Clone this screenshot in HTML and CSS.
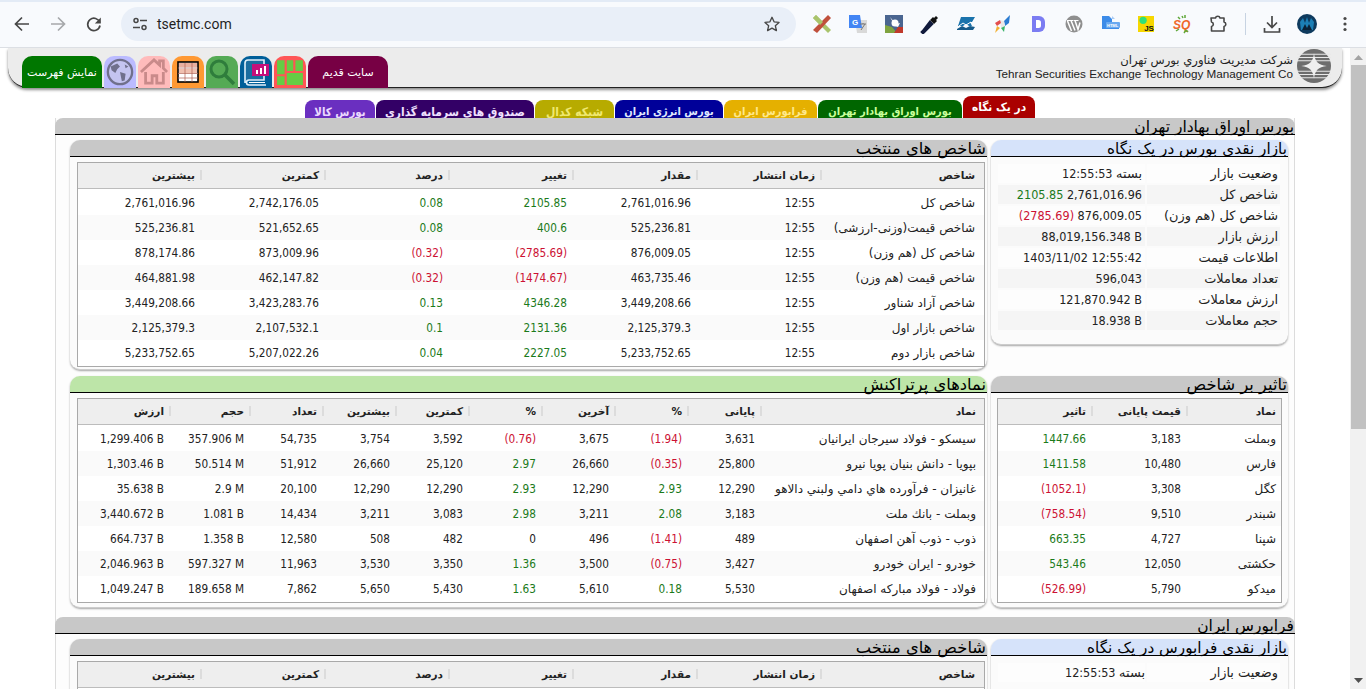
FILE: index.html
```html
<!DOCTYPE html>
<html lang="fa">
<head>
<meta charset="utf-8">
<title>tsetmc.com</title>
<link rel="stylesheet" href="styles.css">
</head>
<body>
<div class="chrome">
  <div class="nav">
    <svg class="ic" viewBox="0 0 20 20"><path d="M17 10H4M10 3.500 3.500 10l6.500 6.500" fill="none" stroke="#474747" stroke-width="1.700"/></svg>
    <svg class="ic" viewBox="0 0 20 20"><path d="M3 10h13M10 3.500l6.500 6.500-6.500 6.500" fill="none" stroke="#a6a8ab" stroke-width="1.700"/></svg>
    <svg class="ic" viewBox="0 0 20 20"><path d="M15.800 8.500A6.200 6.200 0 1 0 16 11.500" fill="none" stroke="#474747" stroke-width="1.700"/><path d="M16.800 3.500v6h-6z" fill="#474747"/></svg>
  </div>
  <div class="omnibox">
    <span class="tune"><svg width="16" height="16" viewBox="0 0 16 16"><circle cx="4" cy="4.500" r="2" fill="none" stroke="#474747" stroke-width="1.500"/><path d="M8 4.500h7M1 11.500h7" stroke="#474747" stroke-width="1.500"/><circle cx="12" cy="11.500" r="2" fill="none" stroke="#474747" stroke-width="1.500"/></svg></span>
    <span class="url">tsetmc.com</span>
    <svg class="star" viewBox="0 0 20 20"><path d="M10 2.500l2.300 5.100 5.500.6-4.100 3.700 1.200 5.500L10 14.600l-4.900 2.800 1.200-5.500L2.200 8.200l5.500-.6z" fill="none" stroke="#474747" stroke-width="1.500" stroke-linejoin="round"/></svg>
  </div>
  <div class="exts">
    <svg class="ext" viewBox="0 0 20 20"><path d="M1 4l3-3 15 15-3 3z" fill="#a9c46c"/><path d="M16 1l3 3L5 19l-4-3z" fill="#c0503c"/><path d="M1 4l3-3 7 7-3 3z" fill="#a9c46c"/></svg>
    <svg class="ext" viewBox="0 0 20 20"><path d="M7 6h12v13H9z" fill="#d9d9d9"/><path d="M1 1h11l2 13H1z" fill="#4285f4"/><text x="4" y="11" class="ext-g">G</text><path d="M12 10h6M15 9v1M13 16l4-6" stroke="#777" stroke-width="1"/></svg>
    <svg class="ext" viewBox="0 0 20 20"><rect x="1" y="1" width="18" height="18" fill="#4a6590"/><path d="M1 19V11l7 2 5 6z" fill="#7fa33f"/><path d="M10 19l4-6 5 0v6z" fill="#c0392b"/><path d="M6 3l6 7 4-1-2 4-3-1" fill="#fff"/><circle cx="11" cy="9" r="3.500" fill="#fff"/></svg>
    <svg class="ext" viewBox="0 0 20 20"><path d="M3 17l-1 1 1 1 1-1 8-8-2-2z" fill="#1c2b55" stroke="#111a3c" stroke-width="2.500"/><path d="M10 6l4 4 3-3-1-1 2-2-2-2-2 2-1-1z" fill="#111"/></svg>
    <svg class="ext" viewBox="0 0 20 20"><path d="M5 3h14l-3 5h-2l2 4h-3l-3-2-3 2H2z" fill="#1a73ac"/><path d="M1 15l5-3 4 2 4-2 5 1-2 3H1z" fill="#155a8a"/><path d="M3 12l4-3 3 2 5-3" stroke="#fff" fill="none"/></svg>
    <svg class="ext" viewBox="0 0 20 20"><path d="M12 7l6-6-1 8-4 3z" fill="#2a7bd1"/><path d="M8 6l4 1 1 5-4 2z" fill="#e8e8e8"/><path d="M3 9l5-3 1 3-4 3z" fill="#e34d4d"/><path d="M9 14l4-2-1 6z" fill="#3ab56a"/><path d="M5 12l3 2-5 5z" fill="#f2b134"/></svg>
    <svg class="ext" viewBox="0 0 20 20"><path d="M4 2h7a6 6 0 0 1 6 6v4a6 6 0 0 1-6 6H4z" fill="#7b7cf2"/><path d="M8 6h2.500a2.500 2.500 0 0 1 2.500 2.500v3a2.500 2.500 0 0 1-2.500 2.500H8z" fill="#fff"/></svg>
    <svg class="ext" viewBox="0 0 20 20"><circle cx="10" cy="10" r="8.500" fill="#8f8f8f"/><path d="M3.500 7l4 10M7 6.500l4 10M11 6.500l3 9 2-7" fill="none" stroke="#fff" stroke-width="1.500"/><path d="M3 6.500h6M9.500 6.500h5" stroke="#fff" stroke-width="1"/></svg>
    <svg class="ext" viewBox="0 0 20 20"><path d="M2 2h7l3 3v3h7v7H2z" fill="#3c8be8"/><path d="M12 2v3h3" fill="#a8cbf5"/><rect x="6" y="8" width="14" height="6" rx="1" fill="#6aa9f0"/><text x="7" y="13" class="ext-html">HTML</text></svg>
    <svg class="ext js" viewBox="0 0 22 22"><rect width="22" height="22" fill="#f7d700"/><circle cx="7" cy="6" r="5" fill="#2fe07a"/><text x="8.500" y="20" class="ext-js">JS</text></svg>
    <svg class="ext" viewBox="0 0 20 20"><text x="1" y="15" class="ext-sq">SQ</text><path d="M6 3l2 2M13 1v3M10 2l1 2M4 17l3-2M12 19l2-3M16 18l-2-2" stroke="#5fa83a" stroke-width="1.500"/></svg>
    <svg class="ic puzzle" viewBox="0 0 20 20"><path d="M3 4h4.500a2.300 2.300 0 0 1 4.500 0H16v4a2.300 2.300 0 0 1 0 4.500V17H3.500v-4.500a2.300 2.300 0 0 0 0-4.500z" fill="none" stroke="#474747" stroke-width="1.600" stroke-linejoin="round"/></svg>
    <span class="sep"></span>
    <svg class="ic dl" viewBox="0 0 20 20"><path d="M10 2v11M5 8.500l5 5 5-5M2.500 14v4h15v-4" fill="none" stroke="#474747" stroke-width="1.700"/></svg>
    <svg class="avatar" viewBox="0 0 20 20"><circle cx="10" cy="10" r="10" fill="#0e3a5e"/><path d="M3 8l3-4 2 5 2-6 2 6 2-5 3 4-1 8H4z" fill="#1c7fb6"/><path d="M5 16l3-6 2 4 2-4 3 6z" fill="#0a2238"/></svg>
    <svg class="menu" viewBox="0 0 4 16"><circle cx="2" cy="2.500" r="1.600" fill="#474747"/><circle cx="2" cy="8" r="1.600" fill="#474747"/><circle cx="2" cy="13.500" r="1.600" fill="#474747"/></svg>
  </div>
</div>

<div class="viewport">
  <div class="page">
    <header class="site-head">
      <div class="brand">
        <svg class="logo" viewBox="0 0 32 32"><circle cx="16" cy="16" r="16" fill="#6d6d6d"/><path d="M0 5h32M0 8h32M0 11h32M0 21h32M0 24h32M0 27h32" stroke="#e8e8e8" stroke-width="1"/><path d="M16 4c1 8 4 11 12 12-8 1-11 4-12 12-1-8-4-11-12-12 8-1 11-4 12-12z" fill="#efefef"/></svg>
        <div class="brand-text">
          <div>شرکت مدیریت فناوري بورس تهران</div>
          <div class="en" dir="ltr">Tehran Securities Exchange Technology Management Co</div>
        </div>
      </div>
      <nav class="tools">
        <a class="tool wide maroon">سایت قدیم</a>
        <a class="tool red"><svg viewBox="0 0 26 26" class="tool-ic"><path d="M1 2h7v13H1zM10 2h6v10h-6zM18 2h7v10h-7zM1 17h7v8H1zM10 14h15v11H10z" fill="#66cc44"/></svg></a>
        <a class="tool blue"><svg viewBox="0 0 28 28" class="tool-ic"><path d="M3 25V5a3 3 0 0 1 3-3h16v20H7a2.500 2.500 0 0 0 0 5h17" fill="#1a6d9f" stroke="#dff0fa" stroke-width="1.600"/><path d="M7 24.500h16" stroke="#fff"/><rect x="10" y="6" width="17" height="12" fill="#c4107a"/><path d="M14 12h2v4h-2zM18 10h2v6h-2zM22 8h2v8h-2z" fill="#fff"/></svg></a>
        <a class="tool green"><svg viewBox="0 0 28 28" class="tool-ic"><circle cx="11" cy="11" r="8" fill="none" stroke="#2f7d3c" stroke-width="3"/><path d="M17 17l9 9" stroke="#2f7d3c" stroke-width="3.500"/></svg></a>
        <a class="tool orange"><svg viewBox="0 0 22 22" class="tool-ic tbl"><rect x="1" y="1" width="20" height="20" fill="#fff" stroke="#000" stroke-width="1.600"/><rect x="2" y="2" width="18" height="4" fill="#e8b0a0"/><rect x="2" y="8" width="18" height="4" fill="#f0c0b0"/><path d="M1 7h20M1 12.500h20M1 17h20M8 2v19M15 2v19" stroke="#b06050" stroke-width=".7"/></svg></a>
        <a class="tool pink"><svg viewBox="0 0 30 30" class="tool-ic"><path d="M1 15 15 2l6 5.500V3h4v8l4 4" fill="none" stroke="#c98a8a" stroke-width="3"/><path d="M6 15v12h7v-8h5v8h7V15" fill="none" stroke="#c98a8a" stroke-width="3"/></svg></a>
        <a class="tool lav"><svg viewBox="0 0 30 30" class="tool-ic"><circle cx="15" cy="15" r="13" fill="#c4c4f0" stroke="#70708c" stroke-width="2.500"/><path d="M5 9l7-3 3 3-3 3-2 4-4-3zM15 15l6 2-1 7-3 1-1-5z" fill="#70708c"/><path d="M20 7l4 2-3 2z" fill="#70708c"/></svg></a>
        <a class="tool wide dgreen">نمایش فهرست</a>
      </nav>
    </header>

    <div class="tabs">
      <a class="tab active t-red">در یک نگاه</a>
      <a class="tab t-green">بورس اوراق بهادار تهران</a>
      <a class="tab t-gold">فرابورس ایران</a>
      <a class="tab t-navy">بورس انرژی ایران</a>
      <a class="tab t-olive">شبکه کدال</a>
      <a class="tab t-indigo">صندوق های سرمایه گذاری</a>
      <a class="tab t-purple">بورس کالا</a>
    </div>

    <main class="sheet">
      <h2 class="sec-title">بورس اوراق بهادار تهران</h2>
      <div class="sec-grid">
        <section class="panel side tall">
          <h3 class="p-title blue-h">بازار نقدی بورس در یک نگاه</h3>
          <div class="facts">
            <div class="fact"><span class="k">وضعیت بازار</span><span class="v"><span class="ar">بسته</span> 12:55:53</span></div>
            <div class="fact"><span class="k">شاخص کل</span><span class="v" dir="ltr"><span class="up">2105.85</span> 2,761,016.96</span></div>
            <div class="fact"><span class="k">شاخص کل (هم وزن)</span><span class="v" dir="ltr"><span class="dn">(2785.69)</span> 876,009.05</span></div>
            <div class="fact"><span class="k">ارزش بازار</span><span class="v" dir="ltr">88,019,156.348 B</span></div>
            <div class="fact"><span class="k">اطلاعات قیمت</span><span class="v" dir="ltr">1403/11/02 12:55:42</span></div>
            <div class="fact"><span class="k">تعداد معاملات</span><span class="v" dir="ltr">596,043</span></div>
            <div class="fact"><span class="k">ارزش معاملات</span><span class="v" dir="ltr">121,870.942 B</span></div>
            <div class="fact"><span class="k">حجم معاملات</span><span class="v" dir="ltr">18.938 B</span></div>
          </div>
        </section>
        <section class="panel wide-p">
          <h3 class="p-title">شاخص های منتخب</h3>
          <div class="tbl-box">
            <table class="grid idx">
              <colgroup><col class="c1"><col class="c"><col class="c"><col class="c"><col class="c"><col class="c"><col class="c"></colgroup>
              <thead><tr><th>شاخص</th><th>زمان انتشار</th><th>مقدار</th><th>تغییر</th><th>درصد</th><th>کمترین</th><th>بیشترین</th></tr></thead>
              <tbody>
                <tr><td>شاخص کل</td><td>12:55</td><td>2,761,016.96</td><td class="up">2105.85</td><td class="up">0.08</td><td>2,742,176.05</td><td>2,761,016.96</td></tr>
                <tr><td>شاخص قیمت(وزنی-ارزشی)</td><td>12:55</td><td>525,236.81</td><td class="up">400.6</td><td class="up">0.08</td><td>521,652.65</td><td>525,236.81</td></tr>
                <tr><td>شاخص کل (هم وزن)</td><td>12:55</td><td>876,009.05</td><td class="dn">(2785.69)</td><td class="dn">(0.32)</td><td>873,009.96</td><td>878,174.86</td></tr>
                <tr><td>شاخص قیمت (هم وزن)</td><td>12:55</td><td>463,735.46</td><td class="dn">(1474.67)</td><td class="dn">(0.32)</td><td>462,147.82</td><td>464,881.98</td></tr>
                <tr><td>شاخص آزاد شناور</td><td>12:55</td><td>3,449,208.66</td><td class="up">4346.28</td><td class="up">0.13</td><td>3,423,283.76</td><td>3,449,208.66</td></tr>
                <tr><td>شاخص بازار اول</td><td>12:55</td><td>2,125,379.3</td><td class="up">2131.36</td><td class="up">0.1</td><td>2,107,532.1</td><td>2,125,379.3</td></tr>
                <tr><td>شاخص بازار دوم</td><td>12:55</td><td>5,233,752.65</td><td class="up">2227.05</td><td class="up">0.04</td><td>5,207,022.26</td><td>5,233,752.65</td></tr>
              </tbody>
            </table>
          </div>
        </section>
        <section class="panel side low">
          <h3 class="p-title">تاثیر بر شاخص</h3>
          <div class="tbl-box">
            <table class="grid impact">
              <colgroup><col class="i1"><col class="i2"><col class="i3"></colgroup>
              <thead><tr><th>نماد</th><th>قیمت پایانی</th><th>تاثیر</th></tr></thead>
              <tbody>
                <tr><td>وبملت</td><td>3,183</td><td class="up">1447.66</td></tr>
                <tr><td>فارس</td><td>10,480</td><td class="up">1411.58</td></tr>
                <tr><td>کگل</td><td>3,308</td><td class="dn">(1052.1)</td></tr>
                <tr><td>شبندر</td><td>9,510</td><td class="dn">(758.54)</td></tr>
                <tr><td>شپنا</td><td>4,727</td><td class="up">663.35</td></tr>
                <tr><td>حکشتی</td><td>12,050</td><td class="up">543.46</td></tr>
                <tr><td>میدکو</td><td>5,790</td><td class="dn">(526.99)</td></tr>
              </tbody>
            </table>
          </div>
        </section>
        <section class="panel wide-p low">
          <h3 class="p-title green-h">نمادهای پرتراکنش</h3>
          <div class="tbl-box">
            <table class="grid top">
              <colgroup><col class="t1"><col class="t2"><col class="t2"><col class="t2"><col class="t2"><col class="t2"><col class="t2"><col class="t2"><col class="t3"><col class="t4"></colgroup>
              <thead><tr><th>نماد</th><th>پایانی</th><th>%</th><th>آخرین</th><th>%</th><th>کمترین</th><th>بیشترین</th><th>تعداد</th><th>حجم</th><th>ارزش</th></tr></thead>
              <tbody>
                <tr><td>سیسکو - فولاد سیرجان ایرانیان</td><td>3,631</td><td class="dn">(1.94)</td><td>3,675</td><td class="dn">(0.76)</td><td>3,592</td><td>3,754</td><td>54,735</td><td>357.906 M</td><td>1,299.406 B</td></tr>
                <tr><td>بپویا - دانش بنیان پویا نیرو</td><td>25,800</td><td class="dn">(0.35)</td><td>26,660</td><td class="up">2.97</td><td>25,120</td><td>26,660</td><td>51,912</td><td>50.514 M</td><td>1,303.46 B</td></tr>
                <tr><td>غانیزان - فرآورده هاي دامي ولبني دالاهو</td><td>12,290</td><td class="up">2.93</td><td>12,290</td><td class="up">2.93</td><td>12,290</td><td>12,290</td><td>20,100</td><td>2.9 M</td><td>35.638 B</td></tr>
                <tr><td>وبملت - بانك ملت</td><td>3,183</td><td class="up">2.08</td><td>3,211</td><td class="up">2.98</td><td>3,083</td><td>3,211</td><td>14,434</td><td>1.081 B</td><td>3,440.672 B</td></tr>
                <tr><td>ذوب - ذوب آهن اصفهان</td><td>489</td><td class="dn">(1.41)</td><td>496</td><td>0</td><td>482</td><td>508</td><td>12,580</td><td>1.358 B</td><td>664.737 B</td></tr>
                <tr><td>خودرو - ایران خودرو</td><td>3,427</td><td class="dn">(0.75)</td><td>3,500</td><td class="up">1.36</td><td>3,350</td><td>3,530</td><td>11,963</td><td>597.327 M</td><td>2,046.963 B</td></tr>
                <tr><td>فولاد - فولاد مباركه اصفهان</td><td>5,530</td><td class="up">0.18</td><td>5,610</td><td class="up">1.63</td><td>5,430</td><td>5,650</td><td>7,862</td><td>189.658 M</td><td>1,049.247 B</td></tr>
              </tbody>
            </table>
          </div>
        </section>
      </div>

      <h2 class="sec-title second">فرابورس ایران</h2>
      <div class="sec-grid">
        <section class="panel side tall">
          <h3 class="p-title blue-h">بازار نقدی فرابورس در یک نگاه</h3>
          <div class="facts">
            <div class="fact"><span class="k">وضعیت بازار</span><span class="v shifted"><span class="ar">بسته</span> 12:55:53</span></div>
          </div>
        </section>
        <section class="panel wide-p">
          <h3 class="p-title">شاخص های منتخب</h3>
          <div class="tbl-box">
            <table class="grid idx">
              <colgroup><col class="c1"><col class="c"><col class="c"><col class="c"><col class="c"><col class="c"><col class="c"></colgroup>
              <thead><tr><th>شاخص</th><th>زمان انتشار</th><th>مقدار</th><th>تغییر</th><th>درصد</th><th>کمترین</th><th>بیشترین</th></tr></thead>
            </table>
          </div>
        </section>
      </div>
    </main>
  </div>

  <div class="scrollbar">
    <svg class="arrow" viewBox="0 0 9 5"><path d="M4.500 0 9 5H0z" fill="#a3a3a3"/></svg>
    <div class="thumb"></div>
    <svg class="arrow bottom" viewBox="0 0 9 5"><path d="M0 0h9L4.500 5z" fill="#505050"/></svg>
  </div>
</div>
</body>
</html>
```

FILE: styles.css
```css
* { box-sizing: border-box; }
html, body { margin: 0; height: 689px; overflow: hidden; background: #fff; }
body { font-family: "DejaVu Sans", "Liberation Sans", sans-serif; font-stretch: condensed; font-size: 11.700px; color: #222; }

/* browser bar */
.chrome { height: 48px; display: flex; align-items: center; background: #f8fafd; border-top: 2px solid #e3ebf6; border-bottom: 1px solid #dcdfe4; padding: 0 0 1px 12px; font-family: Roboto, sans-serif; font-stretch: normal; }
.nav { display: flex; gap: 16px; width: 109px; }
.ic { width: 20px; height: 20px; }
.omnibox { width: 675px; height: 34px; border-radius: 17px; background: #e9eff8; display: flex; align-items: center; padding-left: 11px; }
.tune { width: 16px; height: 16px; margin-right: 9px; }
.url { font-size: 14px; color: #1f1f1f; flex: 1; }
.star { width: 18px; height: 18px; margin-right: 15px; }
.exts { display: flex; align-items: center; margin-left: 16px; }
.ext { width: 20px; height: 20px; margin-right: 16px; flex: none; }
.js { width: 16px; height: 16px; margin-left: 2px; margin-right: 18px; }
.puzzle { margin-right: 17px; }
.sep { width: 1px; height: 22px; background: #c7d3e2; margin-right: 16px; }
.dl { margin-right: 15px; }
.avatar { width: 20px; height: 20px; margin-right: 26px; }
.menu { width: 4px; height: 16px; }
.ext-g { font: 700 8px "Liberation Sans", sans-serif; fill: #fff; }
.ext-html { font: 700 4px "Liberation Sans", sans-serif; fill: #fff; }
.ext-js { font: 700 11px "Liberation Sans", sans-serif; fill: #111; }
.ext-sq { font: italic 700 12px "Liberation Sans", sans-serif; fill: #f0682c; }

.viewport { display: flex; height: 641px; }
.page { width: 1350px; overflow: hidden; direction: rtl; }
.scrollbar { width: 16px; background: #f1f1f1; display: flex; flex-direction: column; align-items: center; }
.arrow { width: 9px; height: 5px; margin-top: 7px; }
.thumb { width: 15px; height: 364px; background: #c1c1c1; margin: 5px 0 0 1px; }
.arrow.bottom { margin-top: auto; margin-bottom: 6px; }

/* site header */
.site-head { margin: 0 8px; height: 40px; background: #ececec; border-bottom: 1px solid #222; border-radius: 0 0 20px 20px; box-shadow: 0 2px 3px rgba(0,0,0,.45); display: flex; justify-content: space-between; padding: 0 11px 0 14px; }
.brand { display: flex; gap: 4px; padding-top: 1px; }
.logo { width: 34px; height: 34px; flex: none; }
.brand-text { font-size: 11.600px; font-stretch: normal; line-height: 13px; padding-top: 5px; color: #222; }
.brand-text .en { font-family: "Liberation Sans", sans-serif; font-size: 11.700px; line-height: 14px; }
.tools { display: flex; gap: 2px; padding-top: 8px; }
.tool { display: flex; align-items: center; justify-content: center; width: 32px; height: 32px; border-radius: 10px 10px 0 0; color: #fff; font-size: 11px; font-stretch: normal; }
.tool.wide { width: 80px; }
.tool-ic { width: 28px; height: 28px; }
.tool-ic.tbl { width: 22px; height: 22px; }
.maroon { background: #770044; }
.red { background: #ff5555; }
.blue { background: #005f99; }
.green { background: #55aa55; }
.orange { background: #ff9933; }
.pink { background: #ffbbbb; }
.lav { background: #bbbbff; }
.dgreen { background: #007700; }

/* tabs */
.tabs { display: flex; gap: 1px; align-items: flex-end; height: 22px; margin: 8px 315px 0 0; overflow: hidden; }
.tab { height: 18px; border-radius: 8px 8px 0 0; padding-top: 3px; color: #fff; font-size: 11px; font-weight: 700; text-align: center; line-height: 18px; flex: none; }
.tab.active { height: 22px; padding-top: 1px; line-height: 20px; }
.t-red { width: 72px; background: #aa0000; font-size: 11.800px; }
.t-green { width: 144px; background: #006600; color: #c8ff9a; }
.t-gold { width: 93px; background: #e5b000; color: #ffe88a; }
.t-navy { width: 108px; background: #000099; color: #dfe6ff; }
.t-olive { width: 79px; background: #b7ab00; color: #f0e870; font-size: 12px; }
.t-indigo { width: 158px; background: #330066; color: #f0e0ff; font-size: 11.900px; }
.t-purple { width: 70px; background: #6a2fc0; color: #ead8ff; font-size: 11.400px; }

/* sheet */
.sheet { margin: 0 55px; width: 1240px; height: 600px; background: #fdfdfd; border: solid #dcdcdc; border-width: 0 1px; }
.sec-title { margin: 0 -1px; height: 17px; background: #c8c8c8; border-bottom: 1px solid #000; border-radius: 8px 8px 0 0; font-size: 15.500px; font-stretch: normal; font-weight: 400; line-height: 18px; padding: 0 1px 0 0; color: #000; }
.sec-title.second { margin-top: 9px; }
.sec-grid { display: grid; grid-template-columns: 297px 917px; column-gap: 4px; row-gap: 6px; padding: 5px 6px 0 0; align-content: start; }
.panel { border-radius: 10px; background: #fbfbfb; border-bottom: 1px solid #ccc; box-shadow: 0 1px 2px rgba(0,0,0,.35); height: 230px; }
.panel.tall { height: 205px; }
.panel.low { height: 232px; }
.p-title { margin: 0; height: 17px; background: #c8c8c8; border-bottom: 1px solid #000; border-radius: 10px 10px 0 0; font-size: 16.300px; font-stretch: normal; font-weight: 400; line-height: 18px; padding-right: 1px; color: #000; }
.p-title.blue-h { background: #d6e3fa; font-size: 15.300px; }
.p-title.green-h { background: #bde5a8; }

/* fact list */
.facts { padding: 7px 8px 0 7px; }
.fact { display: grid; grid-template-columns: 133px 147px; column-gap: 2px; height: 21px; }
.fact > span { display: block; height: 19px; line-height: 19px; }
.k { padding-right: 2px; font-size: 12.900px; font-stretch: normal; }
.v { padding-right: 3px; font-size: 12.500px; white-space: nowrap; }
.v[dir="ltr"] { text-align: right; padding: 0 3px 0 0; }
.ar { font-size: 12.900px; font-stretch: normal; }
.v.shifted { padding-right: 0; }
.fact:nth-child(even) > span { background: #f5f5f5; }
.fact:nth-child(odd) > span { background: #fdfdfd; }

/* data tables */
.tbl-box { border: 1px solid #a9a9a9; height: 205px; background: #fff; overflow: hidden; margin: 5px 2px 0 7px; }
.side .tbl-box { margin: 5px 6px 0 6px; }
.grid { width: 100%; border-collapse: collapse; table-layout: fixed; }
.grid th { height: 25px; border-bottom: 1px solid #bcbcbc; font-weight: 700; font-size: 10.500px; font-stretch: normal; color: #222; text-align: right; padding: 0 5px 0 0; white-space: nowrap; background: #eeeeee linear-gradient(#dcdcdc, #dcdcdc) left center / 2px 10px no-repeat; }
.grid th:first-child { padding-right: 9px; }
.grid td { height: 25px; text-align: right; padding: 0 5px 0 0; white-space: nowrap; direction: ltr; }
.grid td:first-child { direction: rtl; padding-right: 9px; font-size: 12px; font-stretch: normal; }
.top th:first-child, .top td:first-child { padding-right: 8px; }
.impact th:first-child, .impact td:first-child { padding-right: 5px; }
.grid tbody::before { content: ""; display: table-row; height: 2px; }
.grid tbody tr:nth-child(even) td { background: #fafafa; }
.c1 { width: 164px; }
.c { width: 124px; }
.i1, .i2, .i3 { width: 95px; }
.t1 { width: 224px; }
.t2 { width: 73px; }
.t3 { width: 80px; }
.t4 { width: 93px; }
.up { color: #1a7a1a; }
.dn { color: #cc1133; }
```
